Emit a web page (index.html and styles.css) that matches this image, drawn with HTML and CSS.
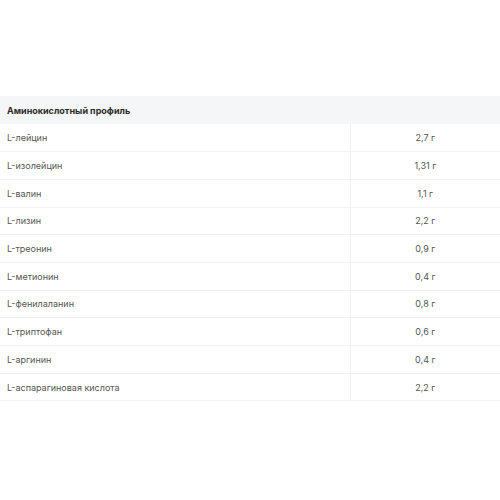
FILE: index.html
```html
<!DOCTYPE html>
<html lang="ru">
<head>
<meta charset="utf-8">
<title>Аминокислотный профиль</title>
<link rel="stylesheet" href="styles.css">
</head>
<body>
<div class="page">
  <table class="amino">
    <colgroup>
      <col class="col-name">
      <col class="col-val">
    </colgroup>
    <thead>
      <tr><th colspan="2">Аминокислотный профиль</th></tr>
    </thead>
    <tbody>
      <tr><td class="name">L-лейцин</td><td class="val">2,7 г</td></tr>
      <tr><td class="name">L-изолейцин</td><td class="val">1,31 г</td></tr>
      <tr><td class="name">L-валин</td><td class="val">1,1 г</td></tr>
      <tr><td class="name">L-лизин</td><td class="val">2,2 г</td></tr>
      <tr><td class="name">L-треонин</td><td class="val">0,9 г</td></tr>
      <tr><td class="name">L-метионин</td><td class="val">0,4 г</td></tr>
      <tr><td class="name">L-фенилаланин</td><td class="val">0,8 г</td></tr>
      <tr><td class="name">L-триптофан</td><td class="val">0,6 г</td></tr>
      <tr><td class="name">L-аргинин</td><td class="val">0,4 г</td></tr>
      <tr><td class="name">L-аспарагиновая кислота</td><td class="val">2,2 г</td></tr>
    </tbody>
  </table>
</div>
</body>
</html>
```

FILE: styles.css
```css
html, body {
  margin: 0;
  padding: 0;
  background: #ffffff;
}
body {
  font-family: Inter, "Noto Sans", sans-serif;
  font-size: 9px;
  color: #555555;
}
.page {
  padding-top: 96px;
}
.amino {
  width: 500px;
  border-collapse: collapse;
  table-layout: fixed;
}
.col-name {
  width: 350px;
}
.col-val {
  width: 150px;
}
.amino th {
  background: #f5f6f8;
  height: 28px;
  padding: 0 7px;
  text-align: left;
  font-weight: 700;
  color: #2b2b2b;
  box-sizing: border-box;
}
.amino td {
  height: 27.7px;
  padding: 0 7px;
  border-bottom: 1px solid #f1f1f3;
  box-sizing: border-box;
}
.amino td.name {
  border-right: 1px solid #f1f1f3;
}
.amino td.val {
  text-align: center;
}
```
